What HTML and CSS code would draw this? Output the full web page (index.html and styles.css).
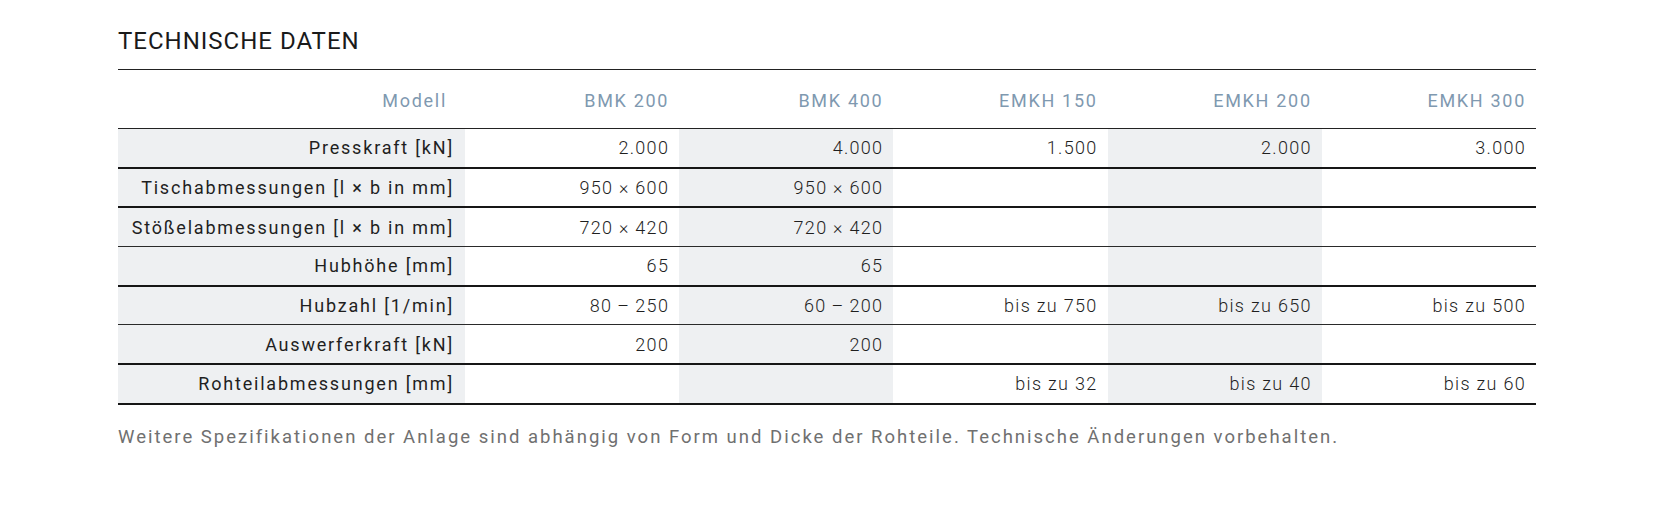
FILE: index.html
```html
<!DOCTYPE html>
<html lang="de">
<head>
<meta charset="utf-8">
<title>Technische Daten</title>
<link rel="stylesheet" href="styles.css">
</head>
<body>
<div class="page">
  <h2 class="title">TECHNISCHE DATEN</h2>
  <table class="specs">
    <colgroup>
      <col class="c-label">
      <col class="c-val">
      <col class="c-val">
      <col class="c-val">
      <col class="c-val">
      <col class="c-val">
    </colgroup>
    <thead>
      <tr>
        <th class="lab">Modell</th>
        <th>BMK 200</th>
        <th>BMK 400</th>
        <th>EMKH 150</th>
        <th>EMKH 200</th>
        <th>EMKH 300</th>
      </tr>
    </thead>
    <tbody>
      <tr class="thick">
        <td class="lab">Presskraft [kN]</td>
        <td>2.000</td><td class="g">4.000</td><td>1.500</td><td class="g">2.000</td><td>3.000</td>
      </tr>
      <tr class="thick">
        <td class="lab">Tischabmessungen [l × b in mm]</td>
        <td>950 × 600</td><td class="g">950 × 600</td><td></td><td class="g"></td><td></td>
      </tr>
      <tr class="thin">
        <td class="lab">Stößelabmessungen [l × b in mm]</td>
        <td>720 × 420</td><td class="g">720 × 420</td><td></td><td class="g"></td><td></td>
      </tr>
      <tr class="thick">
        <td class="lab">Hubhöhe [mm]</td>
        <td>65</td><td class="g">65</td><td></td><td class="g"></td><td></td>
      </tr>
      <tr class="thin">
        <td class="lab">Hubzahl [1/min]</td>
        <td>80&#8201;–&#8201;250</td><td class="g">60&#8201;–&#8201;200</td><td>bis zu 750</td><td class="g">bis zu 650</td><td>bis zu 500</td>
      </tr>
      <tr class="thick">
        <td class="lab">Auswerferkraft [kN]</td>
        <td>200</td><td class="g">200</td><td></td><td class="g"></td><td></td>
      </tr>
      <tr class="thick">
        <td class="lab">Rohteilabmessungen [mm]</td>
        <td></td><td class="g"></td><td>bis zu 32</td><td class="g">bis zu 40</td><td>bis zu 60</td>
      </tr>
    </tbody>
  </table>
  <p class="note">Weitere Spezifikationen der Anlage sind abhängig von Form und Dicke der Rohteile. Technische Änderungen vorbehalten.</p>
</div>
</body>
</html>
```
FILE: styles.css
```css
html, body {
  margin: 0;
  padding: 0;
  background: #ffffff;
}

body {
  font-family: Roboto, "Liberation Sans", sans-serif;
  color: #1c1c1c;
}

.page {
  padding: 27px 0 0 118px;
  width: 1418px;
}

.title {
  margin: 0;
  font-size: 24px;
  font-weight: 400;
  letter-spacing: 1px;
  line-height: 28px;
  height: 42px;
  color: #1a1a1a;
}

.specs {
  width: 1418px;
  border-collapse: collapse;
  table-layout: fixed;
  border-top: 1px solid #222;
}

.c-label { width: 347px; }
.c-val { width: 214.2px; }

.specs th,
.specs td {
  text-align: right;
  padding: 0 10px 0 0;
  font-size: 18px;
  white-space: nowrap;
}

.specs thead th {
  height: 56px;
  font-weight: 400;
  letter-spacing: 1.7px;
  color: #7f99b0;
  border-bottom: 1px solid #222;
  padding-top: 2px;
}

.specs thead th.lab {
  padding-right: 18px;
}

.specs tbody td {
  height: 37.7px;
  font-weight: 300;
  letter-spacing: 1.3px;
  color: #1f1f1f;
}

.specs tbody td.lab {
  background: #eef0f2;
  font-weight: 400;
  letter-spacing: 1.8px;
  padding-right: 11px;
}

.specs tbody td.g {
  background: #eef0f2;
}

.specs tr.thick td { border-bottom: 2px solid #161616; }
.specs tr.thin td { border-bottom: 1px solid #2a2a2a; }

.note {
  margin: 21px 0 0 0;
  font-size: 18.5px;
  font-weight: 400;
  letter-spacing: 2px;
  color: #707070;
  white-space: nowrap;
}
```
